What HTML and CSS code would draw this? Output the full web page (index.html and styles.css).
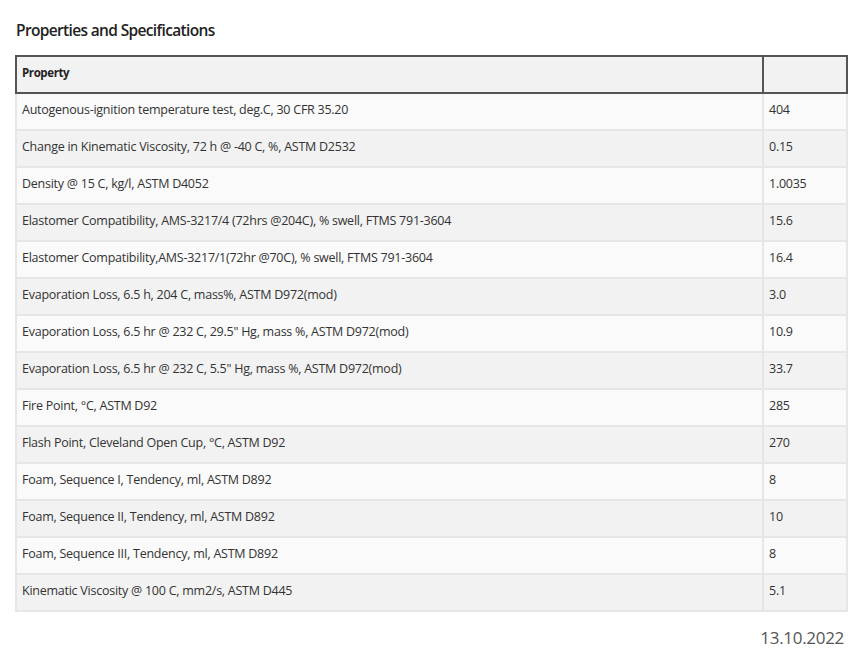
FILE: index.html
```html
<!DOCTYPE html>
<html>
<head>
<meta charset="utf-8">
<link rel="stylesheet" href="styles.css">
</head>
<body>
<div class="page">
  <h2 class="title">Properties and Specifications</h2>
  <table class="specs">
    <thead>
      <tr><th class="prop">Property</th><th class="val"></th></tr>
    </thead>
    <tbody>
      <tr><td>Autogenous-ignition temperature test, deg.C, 30 CFR 35.20</td><td>404</td></tr>
      <tr><td>Change in Kinematic Viscosity, 72 h @ -40 C, %, ASTM D2532</td><td>0.15</td></tr>
      <tr><td>Density @ 15 C, kg/l, ASTM D4052</td><td>1.0035</td></tr>
      <tr><td>Elastomer Compatibility, AMS-3217/4 (72hrs @204C), % swell, FTMS 791-3604</td><td>15.6</td></tr>
      <tr><td>Elastomer Compatibility,AMS-3217/1(72hr @70C), % swell, FTMS 791-3604</td><td>16.4</td></tr>
      <tr><td>Evaporation Loss, 6.5 h, 204 C, mass%, ASTM D972(mod)</td><td>3.0</td></tr>
      <tr><td>Evaporation Loss, 6.5 hr @ 232 C, 29.5" Hg, mass %, ASTM D972(mod)</td><td>10.9</td></tr>
      <tr><td>Evaporation Loss, 6.5 hr @ 232 C, 5.5" Hg, mass %, ASTM D972(mod)</td><td>33.7</td></tr>
      <tr><td>Fire Point, °C, ASTM D92</td><td>285</td></tr>
      <tr><td>Flash Point, Cleveland Open Cup, °C, ASTM D92</td><td>270</td></tr>
      <tr><td>Foam, Sequence I, Tendency, ml, ASTM D892</td><td>8</td></tr>
      <tr><td>Foam, Sequence II, Tendency, ml, ASTM D892</td><td>10</td></tr>
      <tr><td>Foam, Sequence III, Tendency, ml, ASTM D892</td><td>8</td></tr>
      <tr><td>Kinematic Viscosity @ 100 C, mm2/s, ASTM D445</td><td>5.1</td></tr>
    </tbody>
  </table>
  <div class="date">13.10.2022</div>
</div>
</body>
</html>
```

FILE: styles.css
```css
html, body {
  margin: 0;
  padding: 0;
  background: #ffffff;
}
.page {
  width: 833px;
  padding: 19px 0 0 15px;
  font-family: "Open Sans", "Noto Sans", sans-serif;
  color: #333333;
}
.title {
  margin: 0 0 14px 1px;
  font-size: 15.5px;
  font-weight: 600;
  letter-spacing: -0.65px;
  color: #222222;
  line-height: 22px;
}
.specs {
  width: 833px;
  border-collapse: collapse;
  font-size: 12.5px;
  letter-spacing: -0.25px;
}
.specs th {
  background: #f2f2f2;
  border: 2px solid #555555;
  height: 31px;
  padding: 0 0 4px 5px;
  text-align: left;
  font-size: 11.5px;
  font-weight: 700;
  letter-spacing: -0.4px;
  color: #222222;
}
.specs th.val {
  width: 77px;
}
.specs td {
  border: 2px solid #e6e6e6;
  height: 31px;
  padding: 0 0 4px 5px;
  color: #333333;
}
.specs tbody tr:nth-child(odd) td {
  background: #fafafa;
}
.specs tbody tr:nth-child(even) td {
  background: #f2f2f2;
}
.date {
  text-align: right;
  margin-top: 14px;
  padding-right: 4px;
  font-size: 17px;
  color: #555555;
  letter-spacing: -0.3px;
}
```
